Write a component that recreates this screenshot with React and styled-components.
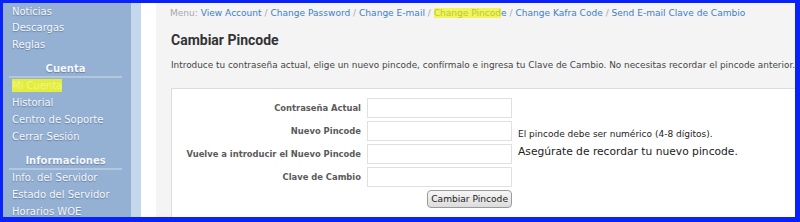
import React from 'react'
import styled, { createGlobalStyle } from 'styled-components'

const GlobalStyle = createGlobalStyle`
  html, body { margin: 0; padding: 0; }
  body { font-family: "DejaVu Sans", Verdana, sans-serif; }
`

const Frame = styled.div`
  width: 800px;
  height: 222px;
  box-sizing: border-box;
  border-style: solid;
  border-color: #0a22fa;
  border-width: 3px 5px 5px 3px;
  display: flex;
  overflow: hidden;
  background: #fff;
`

const Sidebar = styled.div`
  width: 128px;
  flex-shrink: 0;
  background: #94b1d3;
  padding-top: 0.5px;
`

const Strip = styled.div`
  width: 10px;
  flex-shrink: 0;
  background: #c3d7ed;
`

const Gap = styled.div`
  width: 15px;
  flex-shrink: 0;
  background: #fff;
`

const NavItem = styled.div`
  padding-left: 9px;
  line-height: 16.8px;
  font-size: 10px;
  color: #f5f7fb;
  text-shadow: 0 1px 1px rgba(50, 70, 100, 0.45);
  white-space: nowrap;
`

const Mark = styled.span`
  background: #e2ee3c;
  color: #f2f58c;
  text-shadow: none;
  padding: 1px 0;
`

const NavHeader = styled.div`
  margin: 7.5px 9px 0 6px;
  line-height: 15px;
  font-size: 10px;
  font-weight: bold;
  text-align: center;
  color: #f5f7fb;
  text-shadow: 0 1px 1px rgba(50, 70, 100, 0.45);
  border-bottom: 2px solid #b3c7df;
`

const Main = styled.div`
  flex: 1;
  min-width: 0;
  background: #f4f4f4;
  padding: 1px 0 0 14px;
  overflow: hidden;
`

const Crumbs = styled.div`
  line-height: 18px;
  font-size: 9.05px;
  color: #a9a9a9;
  white-space: nowrap;
`

const Crumb = styled.span`
  color: #3f7fc4;
`

const CrumbMark = styled.span`
  background: #f1f55a;
  color: #b9c83a;
`

const Title = styled.h2`
  margin: 8px 0 0 1px;
  line-height: 20px;
  font-family: Roboto, "DejaVu Sans", sans-serif;
  font-size: 14px;
  font-weight: bold;
  color: #333;
`

const Intro = styled.p`
  margin: 6px 0 0 1px;
  line-height: 18px;
  font-size: 8.9px;
  color: #444;
  white-space: nowrap;
`

const Box = styled.div`
  margin: 14px 0 0 1px;
  width: 700px;
  box-sizing: border-box;
  background: #fff;
  border: 1px solid #dcdcdc;
  padding: 9px 0 9px 0;
`

const FormGrid = styled.div`
  display: grid;
  grid-template-columns: 189px 145px auto;
  column-gap: 6px;
  row-gap: 3px;
`

const Label = styled.label`
  align-self: center;
  text-align: right;
  font-size: 8.4px;
  font-weight: bold;
  color: #5a5a5a;
  white-space: nowrap;
`

const Input = styled.input`
  height: 20px;
  box-sizing: border-box;
  border: 1px solid #e0e0e0;
  background: #fff;
  margin: 0;
  padding: 0 3px;
  outline: none;
`

const Note = styled.div`
  align-self: ${p => (p.$big ? 'start' : 'end')};
  line-height: ${p => (p.$big ? '16px' : '14px')};
  font-size: ${p => (p.$big ? '10.7px' : '9px')};
  color: #222;
  white-space: nowrap;
`

const Button = styled.button`
  grid-column: 2;
  justify-self: end;
  margin-top: 0;
  height: 18px;
  padding: 0 3px;
  font-family: "DejaVu Sans", sans-serif;
  font-size: 9.1px;
  color: #222;
  background: linear-gradient(#f6f6f6, #dcdcdc);
  border: 1px solid #9a9a9a;
  border-radius: 4px;
`

const nav1 = ['Noticias', 'Descargas', 'Reglas']
const nav2 = ['Historial', 'Centro de Soporte', 'Cerrar Sesión']
const nav3 = ['Info. del Servidor', 'Estado del Servidor', 'Horarios WOE']

const Sep = () => <span> / </span>

export default function App() {
  return (
    <>
      <GlobalStyle />
      <Frame>
        <Sidebar>
          {nav1.map(n => <NavItem key={n}>{n}</NavItem>)}
          <NavHeader>Cuenta</NavHeader>
          <NavItem><Mark>Mi Cuenta</Mark></NavItem>
          {nav2.map(n => <NavItem key={n}>{n}</NavItem>)}
          <NavHeader>Informaciones</NavHeader>
          {nav3.map(n => <NavItem key={n}>{n}</NavItem>)}
        </Sidebar>
        <Strip />
        <Gap />
        <Main>
          <Crumbs>
            Menu: <Crumb>View Account</Crumb><Sep />
            <Crumb>Change Password</Crumb><Sep />
            <Crumb>Change E-mail</Crumb><Sep />
            <Crumb><CrumbMark>Change Pincod</CrumbMark>e</Crumb><Sep />
            <Crumb>Change Kafra Code</Crumb><Sep />
            <Crumb>Send E-mail Clave de Cambio</Crumb>
          </Crumbs>
          <Title>Cambiar Pincode</Title>
          <Intro>
            Introduce tu contraseña actual, elige un nuevo pincode, confírmalo e ingresa tu Clave de Cambio. No necesitas recordar el pincode anterior.
          </Intro>
          <Box>
            <FormGrid>
              <Label>Contraseña Actual</Label>
              <Input type="password" />
              <span />
              <Label>Nuevo Pincode</Label>
              <Input type="password" />
              <Note>El pincode debe ser numérico (4-8 dígitos).</Note>
              <Label>Vuelve a introducir el Nuevo Pincode</Label>
              <Input type="password" />
              <Note $big>Asegúrate de recordar tu nuevo pincode.</Note>
              <Label>Clave de Cambio</Label>
              <Input type="password" />
              <span />
              <Button type="button">Cambiar Pincode</Button>
            </FormGrid>
          </Box>
        </Main>
      </Frame>
    </>
  )
}
